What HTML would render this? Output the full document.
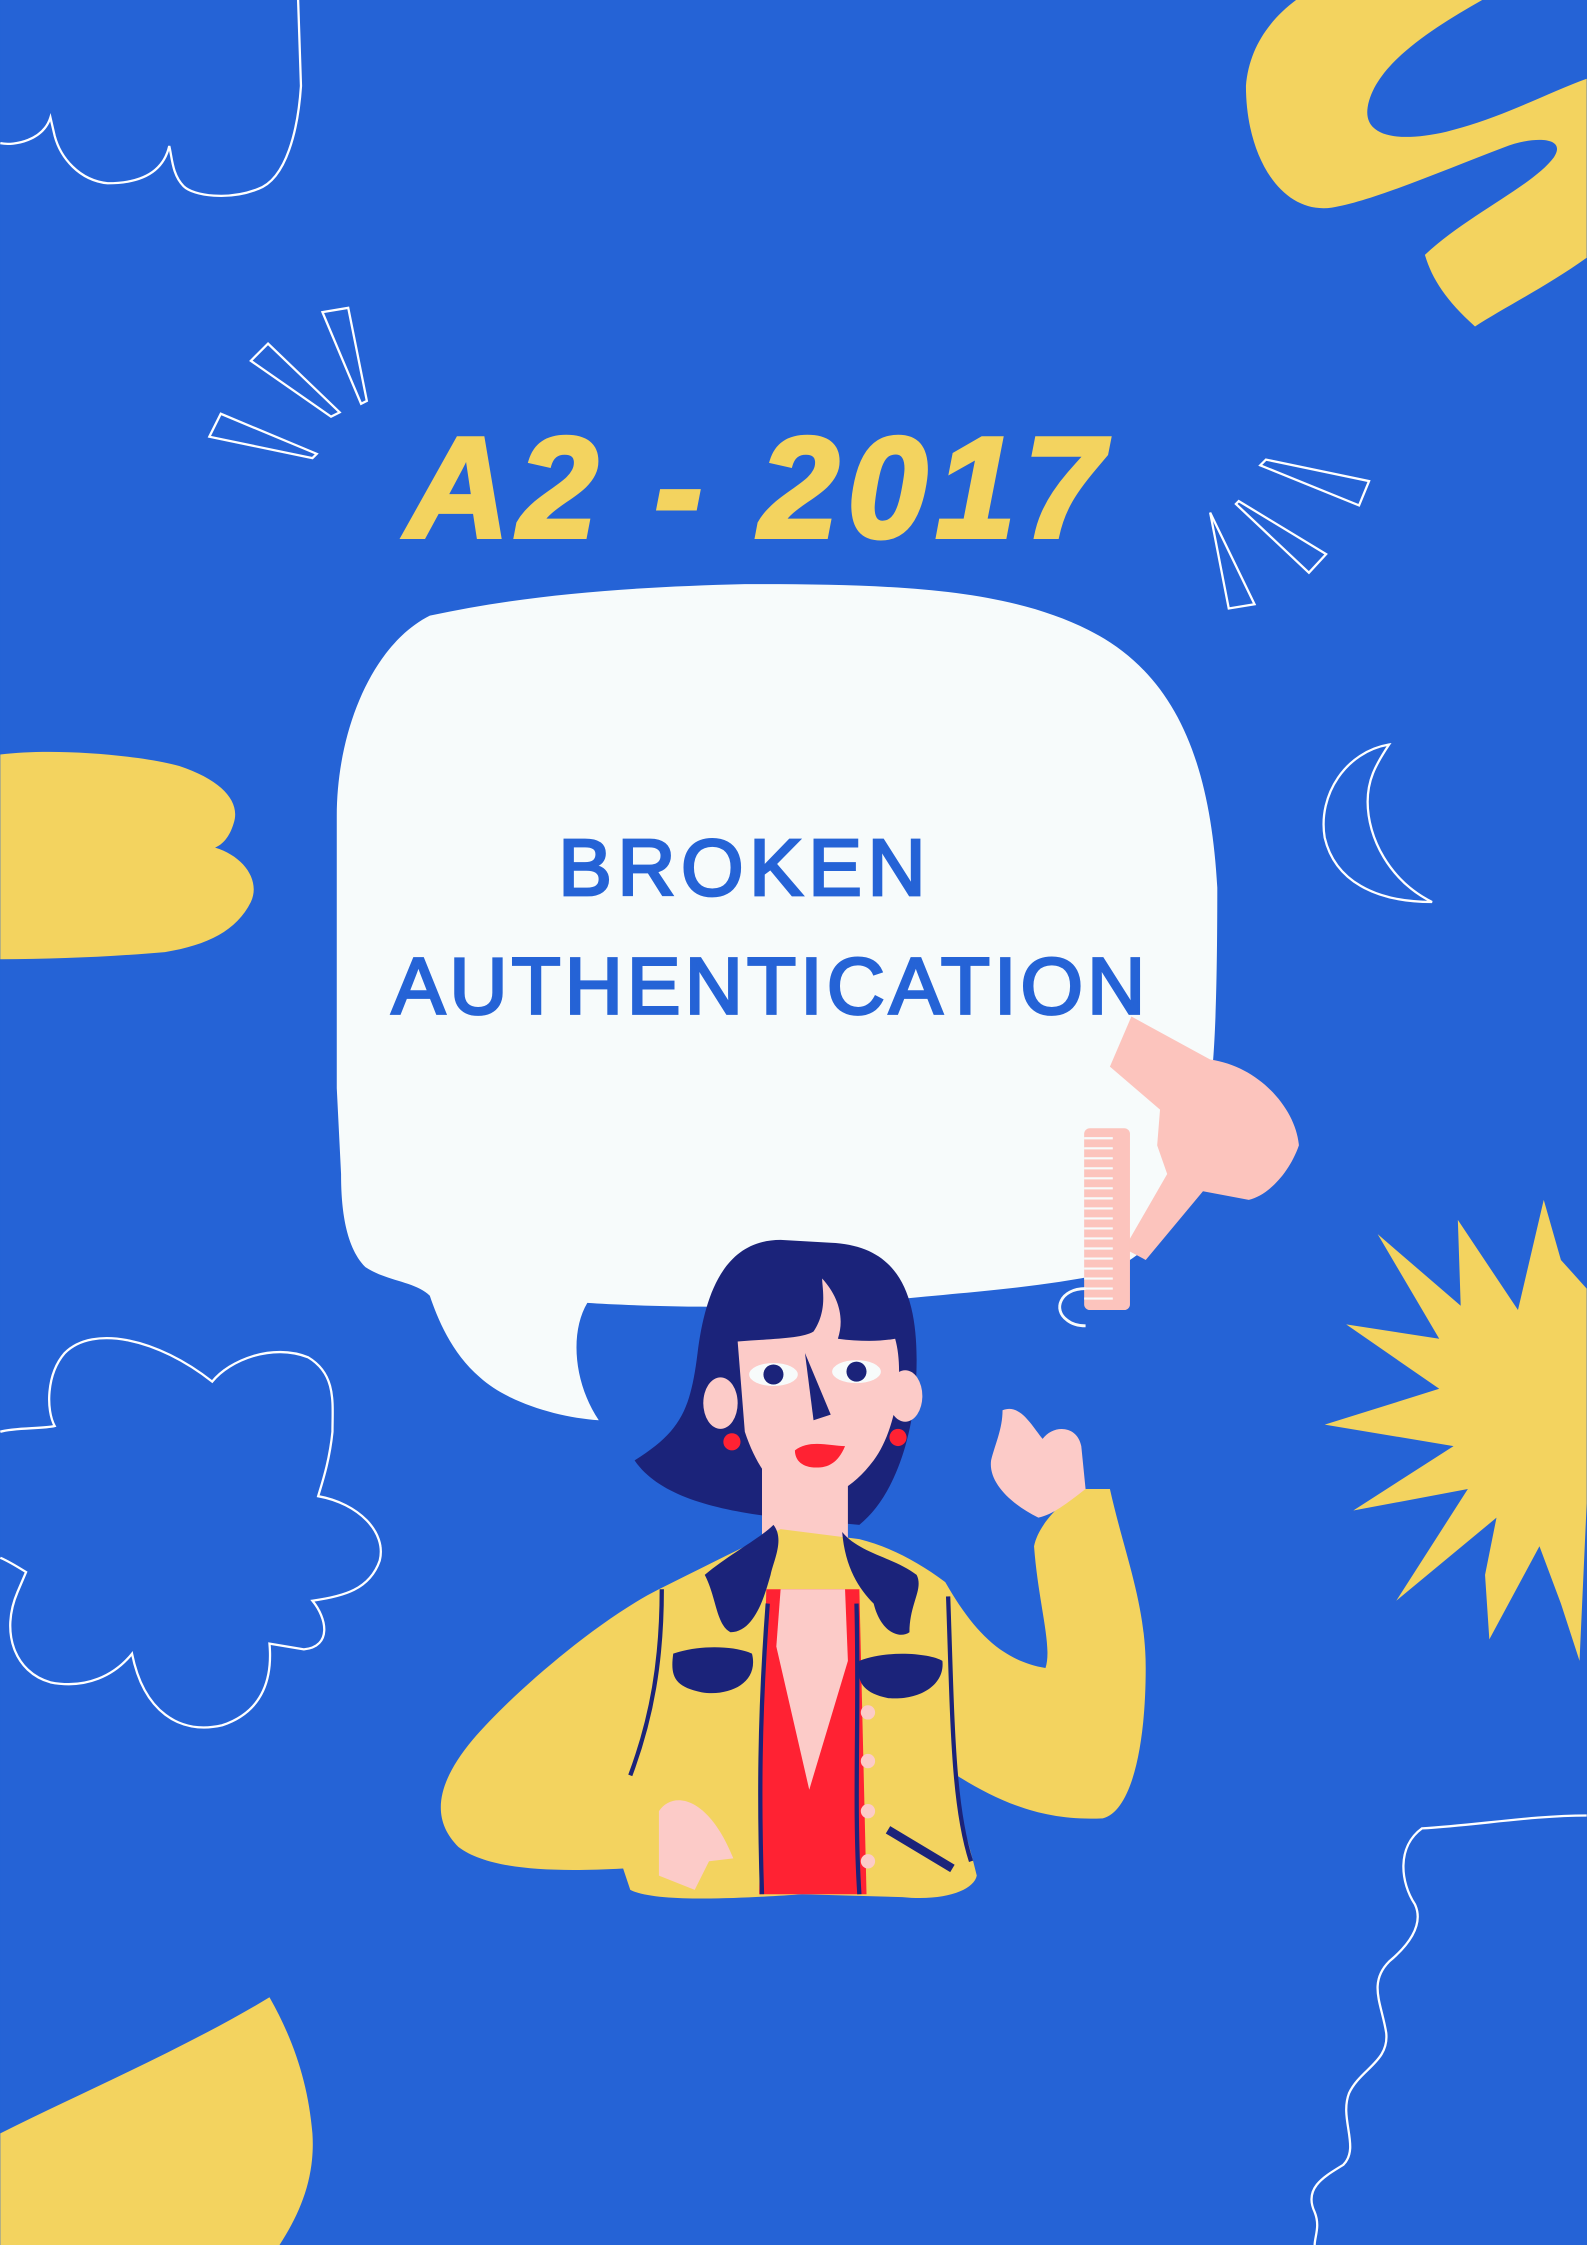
<!DOCTYPE html>
<html><head><meta charset="utf-8"><style>
html,body{margin:0;padding:0;width:1587px;height:2245px;overflow:hidden;background:#2563d6}
svg{display:block}
</style></head><body>
<svg width="1587" height="2245" viewBox="0 0 1108 1568" xmlns="http://www.w3.org/2000/svg">
<rect width="1108" height="1568" fill="#2563d6"/>
<!-- yellow shapes -->
<path d="M905 0 L1035 0 C1000 20 960 45 955 75 C952 95 975 100 1010 92 C1050 82 1080 65 1108 55 L1108 180 C1080 200 1050 215 1030 228 C1010 210 1000 195 995 178 C1025 150 1070 130 1085 110 C1095 95 1070 95 1050 103 C1010 118 960 140 930 145 C895 150 870 110 870 60 C872 35 885 15 905 0 Z" fill="#f3d35f"/>
<path d="M0 527 C40 522 100 528 125 535 C155 545 168 560 163 575 C160 585 155 590 150 592 C170 598 182 615 175 630 C165 650 145 660 115 665 C80 668 40 670 0 670 Z" fill="#f3d35f"/>
<path d="M0 1490 C60 1460 130 1430 188 1395 C205 1425 215 1455 218 1490 C220 1520 210 1545 195 1568 L0 1568 Z" fill="#f3d35f"/>
<path d="M1078 838 L1090 880 L1108 900 L1108 1050 L1103 1160 L1090 1120 L1075 1080 L1040 1145 L1037 1100 L1045 1060 L975 1118 L1025 1040 L945 1055 L1015 1010 L925 995 L1005 970 L940 925 L1005 935 L962 862 L1020 912 L1018 852 L1060 915 Z" fill="#f3d35f"/>
<!-- white outlines -->
<g fill="none" stroke="#ffffff" stroke-width="1.6">
<path d="M208 0 L210 60 C208 90 200 125 180 132 C160 140 135 137 128 130 C120 122 120 110 118 102 C115 115 105 128 75 128 C55 126 42 110 38 95 L35 82 C30 98 10 102 0 100"/>
<path d="M0 1000 C10 997 30 998 38 996 C32 985 32 960 45 945 C65 925 110 935 148 965 C160 950 190 938 215 948 C235 960 232 980 232 1000 C230 1020 225 1035 222 1045 C250 1050 270 1070 265 1090 C258 1110 240 1115 218 1118 C228 1130 232 1150 212 1152 L188 1148 C190 1170 185 1195 155 1205 C125 1212 100 1195 92 1155 C80 1170 60 1180 35 1175 C10 1168 0 1140 12 1112 L18 1098 C10 1093 5 1090 0 1088"/>
<path d="M970 520 C940 525 920 555 925 585 C932 615 960 630 1000 630 C970 615 955 585 955 560 C955 545 960 535 970 520 Z"/>
<path d="M1108 1268 C1070 1268 1030 1275 993 1277 C975 1290 978 1315 988 1330 C995 1345 982 1360 970 1370 C955 1385 965 1400 968 1420 C970 1440 950 1445 942 1462 C935 1480 950 1500 938 1512 C925 1520 910 1528 918 1545 C922 1555 918 1562 918 1568"/>
<path d="M175 252 L187 240 L237 288 L231 291 Z M225 218 L243 215 L256 280 L252 282 Z M146 305 L154 289 L221 317 L218 320 Z"/>
<path d="M880 325 L884 321 L956 336 L949 353 Z M865 350 L926 387 L914 400 L863 352 Z M845 358 L876 422 L858 425 Z"/>
</g>
<!-- title -->
<text x="530" y="375" text-anchor="middle" font-family="Liberation Sans, sans-serif" font-weight="bold" font-style="italic" font-size="100" fill="#f3d35f" stroke="#f3d35f" stroke-width="3" letter-spacing="6">A2 - 2017</text>
<!-- bubble -->
<path d="M300 430 C370 415 440 410 520 408 C620 408 700 410 760 440 C820 470 845 530 850 620 C850 700 848 740 845 760 C840 820 820 870 770 890 C720 900 680 902 600 910 C520 915 440 912 410 910 C398 930 400 965 418 992 C390 990 355 980 335 962 C315 945 305 920 300 905 C290 895 270 895 255 885 C240 870 238 840 238 820 L235 760 L235 570 C235 510 260 450 300 430 Z" fill="#f7fbfb"/>
<text x="520" y="625" text-anchor="middle" font-family="Liberation Sans, sans-serif" font-size="56" fill="#2563d6" stroke="#2563d6" stroke-width="2" letter-spacing="4">BROKEN</text>
<text x="538" y="708" text-anchor="middle" font-family="Liberation Sans, sans-serif" font-size="56" fill="#2563d6" stroke="#2563d6" stroke-width="2" letter-spacing="3">AUTHENTICATION</text>
<!-- hair dryer and comb -->
<path d="M790 710 L845 740 C880 745 905 775 907 800 C900 820 885 835 872 838 L840 832 L800 880 L785 872 L815 820 L808 800 L810 775 L775 745 Z" fill="#fcc4bd"/>
<rect x="757" y="788" width="32" height="127" rx="4" fill="#fcc4bd"/>
<g stroke="#f7fbfb" stroke-width="1.5"><path d="M757 795 h20 M757 802 h20 M757 809 h20 M757 816 h20 M757 823 h20 M757 830 h20 M757 837 h20 M757 844 h20 M757 851 h20 M757 858 h20 M757 865 h20 M757 872 h20 M757 879 h20 M757 886 h20 M757 893 h20 M757 900 h20 M757 907 h20"/></g>
<path d="M758 900 C740 900 735 915 745 922 C750 926 756 926 758 926" fill="none" stroke="#f7fbfb" stroke-width="2"/>
<!-- woman -->
<path d="M545 866 C505 866 492 905 487 945 C482 985 475 1000 443 1020 C460 1045 500 1055 545 1060 L600 1065 C625 1045 640 1000 640 950 C640 900 625 870 580 868 Z" fill="#1b237a"/>
<path d="M532 1000 h60 v80 h-60 Z" fill="#fccbc8"/>
<path d="M515 937 C540 935 560 935 568 930 C578 915 574 900 574 893 C585 905 590 920 585 935 C600 937 615 937 625 935 C632 960 625 1000 610 1020 C595 1040 578 1048 562 1048 C545 1045 530 1030 520 1000 Z" fill="#fccbc8"/>
<ellipse cx="503" cy="980" rx="12" ry="18" fill="#fccbc8"/><ellipse cx="632" cy="975" rx="12" ry="18" fill="#fccbc8"/>
<ellipse cx="540" cy="960" rx="17" ry="8" fill="#f7fbfb"/><circle cx="540" cy="960" r="7" fill="#1b237a"/>
<ellipse cx="598" cy="958" rx="17" ry="8" fill="#f7fbfb"/><circle cx="598" cy="958" r="7" fill="#1b237a"/>
<path d="M562 945 L568 992 L580 988 Z" fill="#1b237a"/>
<path d="M555 1013 C565 1005 580 1010 590 1010 C585 1022 578 1025 570 1025 C560 1025 555 1020 555 1013 Z" fill="#ff2233"/>
<circle cx="511" cy="1007" r="6" fill="#ff2233"/><circle cx="627" cy="1004" r="6" fill="#ff2233"/>
<path d="M460 1110 C420 1130 360 1180 330 1215 C305 1245 300 1270 320 1290 C340 1305 380 1308 435 1305 L440 1320 C460 1330 530 1325 560 1323 L630 1325 C660 1328 680 1320 682 1310 C675 1280 665 1255 668 1240 C700 1260 730 1272 770 1270 C790 1265 800 1220 800 1165 C800 1120 785 1085 775 1040 L755 1040 C740 1050 725 1065 722 1080 C725 1120 735 1150 730 1165 C700 1160 680 1140 660 1105 C640 1090 620 1080 600 1075 L545 1068 C520 1080 490 1095 460 1110 Z" fill="#f3d35f"/>
<path d="M535 1110 L600 1110 L605 1323 L530 1323 Z" fill="#ff2233"/>
<path d="M542 1150 L565 1250 L592 1160 L590 1110 L545 1110 Z" fill="#fccbc8"/>
<path d="M492 1100 C510 1085 530 1075 540 1065 C548 1075 540 1090 538 1100 C535 1110 528 1140 510 1140 C500 1135 500 1115 492 1100 Z M588 1070 C600 1085 625 1088 640 1100 C645 1110 635 1120 635 1140 C628 1145 615 1140 610 1120 C600 1110 590 1095 588 1070 Z" fill="#1b237a"/>
<path d="M470 1155 C490 1148 515 1150 525 1155 C530 1175 510 1185 490 1182 C470 1178 468 1170 470 1155 Z M600 1160 C620 1152 650 1155 658 1160 C660 1178 640 1188 620 1186 C600 1182 598 1172 600 1160 Z" fill="#1b237a"/>
<path d="M462 1110 C462 1160 455 1200 440 1240 M536 1120 C530 1200 530 1260 532 1323 M598 1120 C600 1200 596 1260 600 1323 M662 1115 C665 1200 665 1260 678 1300" stroke="#1b237a" stroke-width="3" fill="none"/>
<path d="M620 1278 L665 1305" stroke="#1b237a" stroke-width="6"/>
<circle cx="606" cy="1196" r="5" fill="#fccbc8"/><circle cx="606" cy="1230" r="5" fill="#fccbc8"/><circle cx="606" cy="1265" r="5" fill="#fccbc8"/><circle cx="606" cy="1300" r="5" fill="#fccbc8"/>
<path d="M460 1265 C470 1250 495 1255 512 1298 L495 1300 L485 1320 L460 1310 Z" fill="#fccbc8"/>
<path d="M700 985 C712 980 720 995 728 1005 C735 995 752 995 755 1010 L758 1040 C745 1050 735 1058 725 1060 C705 1050 690 1035 692 1020 C695 1008 700 998 700 985 Z" fill="#fccbc8"/>
</svg>
</body></html>
